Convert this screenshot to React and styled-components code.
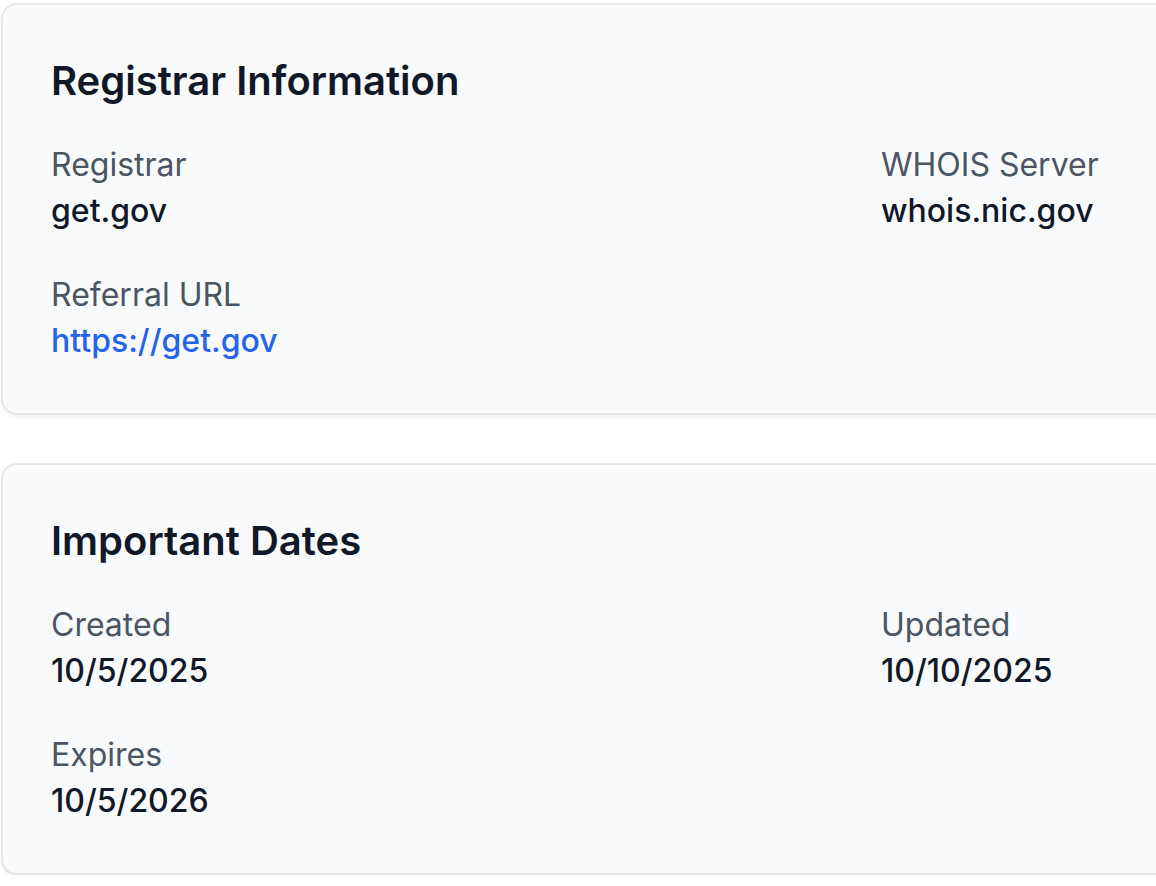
import React from 'react'
import styled, { createGlobalStyle } from 'styled-components'

const GlobalStyle = createGlobalStyle`
  html, body {
    margin: 0;
    padding: 0;
    background: #ffffff;
    overflow: hidden;
  }
  body {
    font-family: Inter, "Noto Sans", "Liberation Sans", sans-serif;
    -webkit-font-smoothing: antialiased;
  }
`

const sections = [
  {
    title: 'Registrar Information',
    fields: [
      { label: 'Registrar', value: 'get.gov' },
      { label: 'WHOIS Server', value: 'whois.nic.gov' },
      { label: 'Referral URL', value: 'https://get.gov', href: 'https://get.gov' },
    ],
  },
  {
    title: 'Important Dates',
    fields: [
      { label: 'Created', value: '10/5/2025' },
      { label: 'Updated', value: '10/10/2025' },
      { label: 'Expires', value: '10/5/2026' },
    ],
  },
]

const App = () => {
  return (
    <Page>
      <GlobalStyle />
      {sections.map((section) => (
        <Card key={section.title}>
          <Heading>{section.title}</Heading>
          <FieldGrid>
            {section.fields.map((field) => (
              <Field key={field.label}>
                <Label>{field.label}</Label>
                {field.href ? (
                  <LinkValue href={field.href}>{field.value}</LinkValue>
                ) : (
                  <Value>{field.value}</Value>
                )}
              </Field>
            ))}
          </FieldGrid>
        </Card>
      ))}
    </Page>
  )
}

const Page = styled.div`
  display: flex;
  flex-direction: column;
  gap: 48px;
  padding: 3px 0 0 1px;
  width: 1800px;
`

const Card = styled.section`
  width: 1728px;
  box-sizing: border-box;
  background-color: #f9fafb;
  border: 2px solid #e5e7eb;
  border-radius: 16px;
  padding: 48px;
  box-shadow: 0 2px 3px rgba(0, 0, 0, 0.06);
`

const Heading = styled.h2`
  margin: 0 0 36px;
  font-size: 40px;
  line-height: 56px;
  font-weight: 600;
  color: #111827;
`

const FieldGrid = styled.dl`
  margin: 0;
  display: grid;
  grid-template-columns: repeat(2, 1fr);
  column-gap: 32px;
  row-gap: 40px;
`

const Field = styled.div`
  display: flex;
  flex-direction: column;
  gap: 2px;
`

const Label = styled.dt`
  font-size: 32px;
  line-height: 40px;
  color: #4b5563;
  font-weight: 400;
`

const Value = styled.dd`
  margin: 0;
  font-size: 32px;
  line-height: 48px;
  font-weight: 500;
  color: #111827;
`

const LinkValue = styled.a`
  font-size: 32px;
  line-height: 48px;
  font-weight: 500;
  color: #2563eb;
  text-decoration: none;
`

export default App
